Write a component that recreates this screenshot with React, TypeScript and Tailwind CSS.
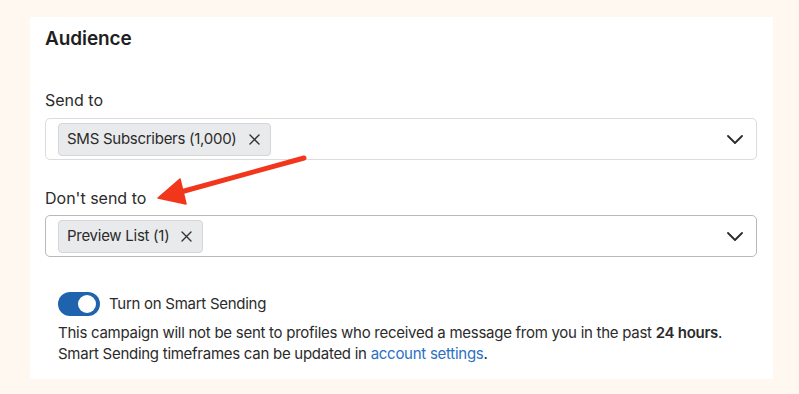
import { useState } from "react";

const font = { fontFamily: "Inter, 'Liberation Sans', sans-serif" };

const Chevron = () => (
  <svg width="16" height="9" viewBox="0 0 16 9" fill="none" className="shrink-0">
    <path d="M1 1l7 7 7-7" stroke="#2b2b2b" strokeWidth="1.8" strokeLinecap="round" strokeLinejoin="round" />
  </svg>
);

const Cross = () => (
  <svg width="11" height="11" viewBox="0 0 11 11" fill="none">
    <path d="M1 1l9 9M10 1l-9 9" stroke="#333" strokeWidth="1.4" strokeLinecap="round" />
  </svg>
);

const MultiSelect = ({ tag, border }: { tag: string; border: string }) => (
  <div className={`flex h-[42px] items-center justify-between rounded-[5px] border bg-white pl-3 pr-[13px] ${border}`}>
    <div className="flex h-[33px] items-center gap-3 rounded-[4px] border border-[#d4d6d9] bg-[#e9eaec] pl-[8px] pr-[10px] text-[15px] tracking-[-0.27px] text-[#2b2b2b]">
      <span>{tag}</span>
      <Cross />
    </div>
    <Chevron />
  </div>
);

export default function App() {
  const [smart, setSmart] = useState(true);

  return (
    <div className="h-[394px] w-[799px] bg-[#fef8f1] pt-[17px] pl-[30px]" style={font}>
      <div className="relative h-[362px] w-[743px] bg-white px-[15px] pr-[16px]">
        <h2 className="pt-[8px] text-[19px] font-semibold leading-[28px] tracking-[-0.1px] text-[#1f1f1f]">Audience</h2>

        <label className="mt-[35px] block text-[16px] leading-[24px] text-[#2b2b2b]">Send to</label>
        <div className="mt-[6px]">
          <MultiSelect tag="SMS Subscribers (1,000)" border="border-[#dcdcdc]" />
        </div>

        <label className="mt-[26px] block text-[16px] leading-[24px] text-[#2b2b2b]">Don't send to</label>
        <div className="mt-[5px]">
          <MultiSelect tag="Preview List (1)" border="border-[#b9b9b9]" />
        </div>

        <div className="mt-[35px] pl-[13px] tracking-[-0.27px]">
          <div className="flex items-center gap-[9px]">
            <button
              onClick={() => setSmart(!smart)}
              className={`flex h-[24px] w-[42px] items-center rounded-full px-[4px] ${smart ? "justify-end bg-[#1f62ad]" : "justify-start bg-gray-300"}`}
            >
              <span className="h-[18px] w-[18px] rounded-full bg-white" />
            </button>
            <span className="text-[15px] text-[#2b2b2b]">Turn on Smart Sending</span>
          </div>
          <p className="mt-[6px] text-[15px] leading-[21px] text-[#2b2b2b]">
            This campaign will not be sent to profiles who received a message from you in the past <b className="font-semibold">24 hours</b>.
            <br />
            Smart Sending timeframes can be updated in <a className="text-[#2b70c2]">account settings</a>.
          </p>
        </div>

        <svg className="pointer-events-none absolute left-0 top-0" width="743" height="362" viewBox="0 0 743 362">
          <g transform="translate(-30 -17)">
            <path d="M304 158 L177 193" stroke="#f2361c" strokeWidth="5" strokeLinecap="round" />
            <path d="M158 198 L180 179 L186 204 Z" fill="#f2361c" stroke="#f2361c" strokeWidth="1.5" strokeLinejoin="round" />
          </g>
        </svg>
      </div>
    </div>
  );
}
